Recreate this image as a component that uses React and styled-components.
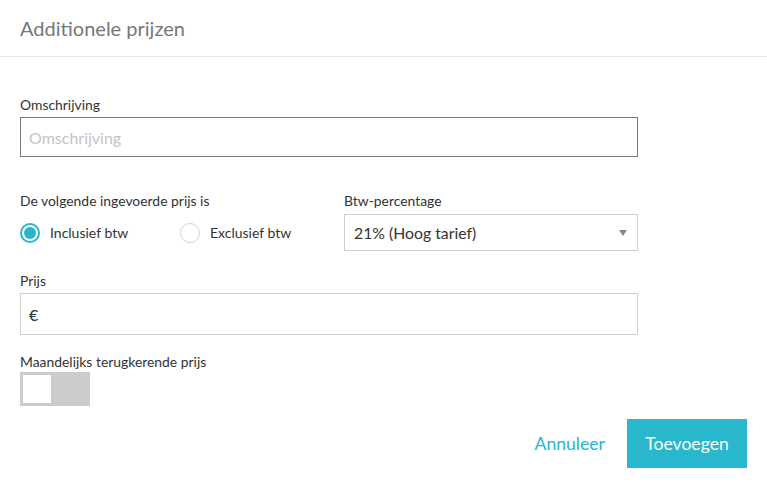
import React, { useState } from "react";
import styled, { createGlobalStyle } from "styled-components";

const Global = createGlobalStyle`
  html, body { margin: 0; padding: 0; background: #fff; }
  body { font-family: Lato, "Open Sans", sans-serif; color: #333; }
  * { box-sizing: border-box; }
`;

const Page = styled.div`
  width: 767px;
  height: 489px;
  display: flex;
  flex-direction: column;
  background: #fff;
`;

const Header = styled.div`
  height: 57px;
  padding: 0 20px;
  display: flex;
  align-items: center;
  border-bottom: 1px solid #e6e6e6;
`;

const Title = styled.h1`
  margin: 0;
  font-size: 20px;
  font-weight: 400;
  color: #777;
`;

const Body = styled.div`
  padding: 40px 0 0 20px;
  width: 638px;
  display: flex;
  flex-direction: column;
`;

const Field = styled.div`
  display: flex;
  flex-direction: column;
  margin-top: ${(p) => p.$mt || 0}px;
`;

const Label = styled.label`
  font-size: 13.9px;
  line-height: 16px;
  color: #333;
  margin-bottom: ${(p) => p.$mb ?? 5}px;
`;

const Input = styled.input`
  width: 100%;
  height: ${(p) => p.$h || 40}px;
  border: 1px solid ${(p) => (p.$dark ? "#7a7a7a" : "#cfcfcf")};
  padding: 0 8px;
  font-family: Lato, sans-serif;
  font-size: 16px;
  color: #333;
  outline: none;
  &::placeholder { color: #c4c4c4; }
`;

const Row = styled.div`
  display: grid;
  grid-template-columns: 1fr 294px;
  column-gap: 24px;
  margin-top: 36px;
`;

const RadioGroup = styled.div`
  display: flex;
  align-items: center;
  height: 37px;
`;

const RadioOption = styled.div`
  display: flex;
  align-items: center;
  width: ${(p) => p.$w}px;
  font-size: 14px;
  color: #333;
  cursor: pointer;
`;

const RadioCircle = styled.span`
  width: 20px;
  height: 20px;
  border-radius: 50%;
  border: ${(p) => (p.$on ? "2px solid #29b6cc" : "1px solid #d2d2d2")};
  display: flex;
  align-items: center;
  justify-content: center;
  margin-right: 10px;
  &::after {
    content: "";
    display: ${(p) => (p.$on ? "block" : "none")};
    width: 12px;
    height: 12px;
    border-radius: 50%;
    background: #29b6cc;
  }
`;

const Select = styled.div`
  height: 37px;
  border: 1px solid #cfcfcf;
  display: flex;
  align-items: center;
  justify-content: space-between;
  padding: 0 10px 0 9px;
  font-size: 15.8px;
  color: #333;
`;

const Arrow = styled.span`
  width: 0;
  height: 0;
  border-left: 4px solid transparent;
  border-right: 4px solid transparent;
  border-top: 6px solid #888;
`;

const Toggle = styled.div`
  width: 70px;
  height: 34px;
  background: #cccccc;
  padding: 3px;
  display: flex;
`;

const Knob = styled.div`
  width: 28px;
  height: 28px;
  background: #fff;
`;

const Footer = styled.div`
  display: flex;
  justify-content: flex-end;
  align-items: center;
  padding: 0 20px 0 0;
  margin-top: 13px;
  gap: 22px;
`;

const TextButton = styled.button`
  background: none;
  border: none;
  padding: 0;
  font-family: Lato, sans-serif;
  font-size: 17.6px;
  color: #29b6cc;
  cursor: pointer;
`;

const PrimaryButton = styled.button`
  width: 120px;
  height: 49px;
  background: #28b7cc;
  border: none;
  color: #fff;
  font-family: Lato, sans-serif;
  font-size: 17.6px;
  cursor: pointer;
`;

export default function App() {
  const [incl, setIncl] = useState(true);
  return (
    <Page>
      <Global />
      <Header>
        <Title>Additionele prijzen</Title>
      </Header>
      <Body>
        <Field>
          <Label $mb={4}>Omschrijving</Label>
          <Input $dark placeholder="Omschrijving" />
        </Field>
        <Row>
          <Field>
            <Label $mb={5}>De volgende ingevoerde prijs is</Label>
            <RadioGroup>
              <RadioOption $w={160} onClick={() => setIncl(true)}>
                <RadioCircle $on={incl} />
                Inclusief btw
              </RadioOption>
              <RadioOption $w={140} onClick={() => setIncl(false)}>
                <RadioCircle $on={!incl} />
                Exclusief btw
              </RadioOption>
            </RadioGroup>
          </Field>
          <Field>
            <Label $mb={5}>Btw-percentage</Label>
            <Select>
              21% (Hoog tarief)
              <Arrow />
            </Select>
          </Field>
        </Row>
        <Field $mt={22}>
          <Label $mb={4}>Prijs</Label>
          <Input $h={42} defaultValue="€" />
        </Field>
        <Field $mt={19}>
          <Label $mb={2}>Maandelijks terugkerende prijs</Label>
          <Toggle>
            <Knob />
          </Toggle>
        </Field>
      </Body>
      <Footer>
        <TextButton>Annuleer</TextButton>
        <PrimaryButton>Toevoegen</PrimaryButton>
      </Footer>
    </Page>
  );
}
